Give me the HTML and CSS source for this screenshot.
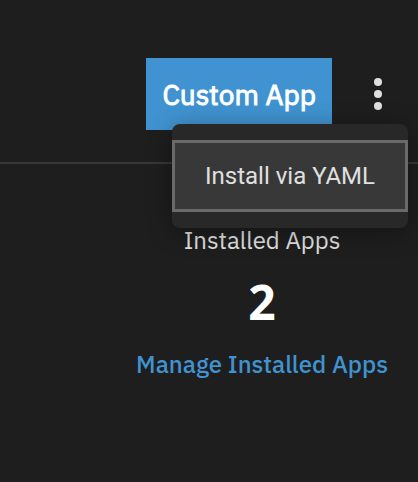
FILE: index.html
```
<!DOCTYPE html>
<html lang="en">
<head>
    <meta charset="UTF-8">
    <meta name="viewport" content="width=device-width, initial-scale=1.0">
    <title>Apps</title>
    <link rel="stylesheet" href="styles.css">
</head>
<body>
    <header class="toolbar">
        <button class="btn-primary" type="button">Custom App</button>
        <div class="more">
            <button class="btn-more" type="button" aria-label="More options" aria-haspopup="menu" aria-expanded="true">
                <svg width="8" height="32" viewBox="0 0 8 32" fill="currentColor">
                    <circle cx="4" cy="4" r="4"/>
                    <circle cx="4" cy="16" r="4"/>
                    <circle cx="4" cy="28" r="4"/>
                </svg>
            </button>
            <div class="menu" role="menu">
                <button class="menu-item" type="button" role="menuitem">Install via YAML</button>
            </div>
        </div>
    </header>

    <main class="content">
        <section class="installed">
            <div class="installed-label">Installed Apps</div>
            <div class="installed-count">2</div>
            <a class="installed-link" href="#">Manage Installed Apps</a>
        </section>
    </main>
</body>
</html>
```
FILE: styles.css
```
* {
    margin: 0;
    padding: 0;
    box-sizing: border-box;
}

body {
    min-height: 100vh;
    background-color: #1e1e1e;
    color: #e0e0e0;
    font-family: "IBM Plex Sans", Roboto, sans-serif;
    font-size: 24px;
    line-height: 32px;
}

button {
    border: none;
    font-family: inherit;
    cursor: pointer;
}

/* Toolbar */
.toolbar {
    display: flex;
    justify-content: flex-end;
    align-items: center;
    gap: 10px;
    padding: 58px 4px 32px;
    border-bottom: 2px solid #383838;
}

.btn-primary {
    height: 72px;
    padding: 0 16px;
    background-color: #4093d0;
    color: #fff;
    font-size: 28px;
    -webkit-text-stroke: 1px;
}

.more {
    position: relative;
}

.btn-more {
    display: flex;
    justify-content: center;
    align-items: center;
    width: 72px;
    height: 72px;
    background: none;
    color: #e0e0e0;
}

/* Dropdown menu */
.menu {
    position: absolute;
    top: 66px;
    right: 6px;
    padding: 16px 0;
    border-radius: 8px;
    background-color: #282828;
    box-shadow: 0 4px 24px rgba(0, 0, 0, 0.35);
}

.menu-item {
    height: 72px;
    padding: 0 30px;
    border: 3px solid #6a6a6a;
    background-color: #383838;
    color: #e0e0e0;
    font-family: Roboto, sans-serif;
    font-size: 24px;
    white-space: nowrap;
}

/* Installed apps */
.content {
    display: flex;
    justify-content: flex-end;
    padding: 60px 30px;
}

.installed {
    display: flex;
    flex-direction: column;
    align-items: center;
    gap: 16px;
}

.installed-count {
    color: #fff;
    font-family: "Noto Sans", sans-serif;
    font-size: 48px;
    font-weight: 700;
    line-height: 60px;
}

.installed-link {
    color: #4093d0;
    font-weight: 500;
    text-decoration: none;
}
```
